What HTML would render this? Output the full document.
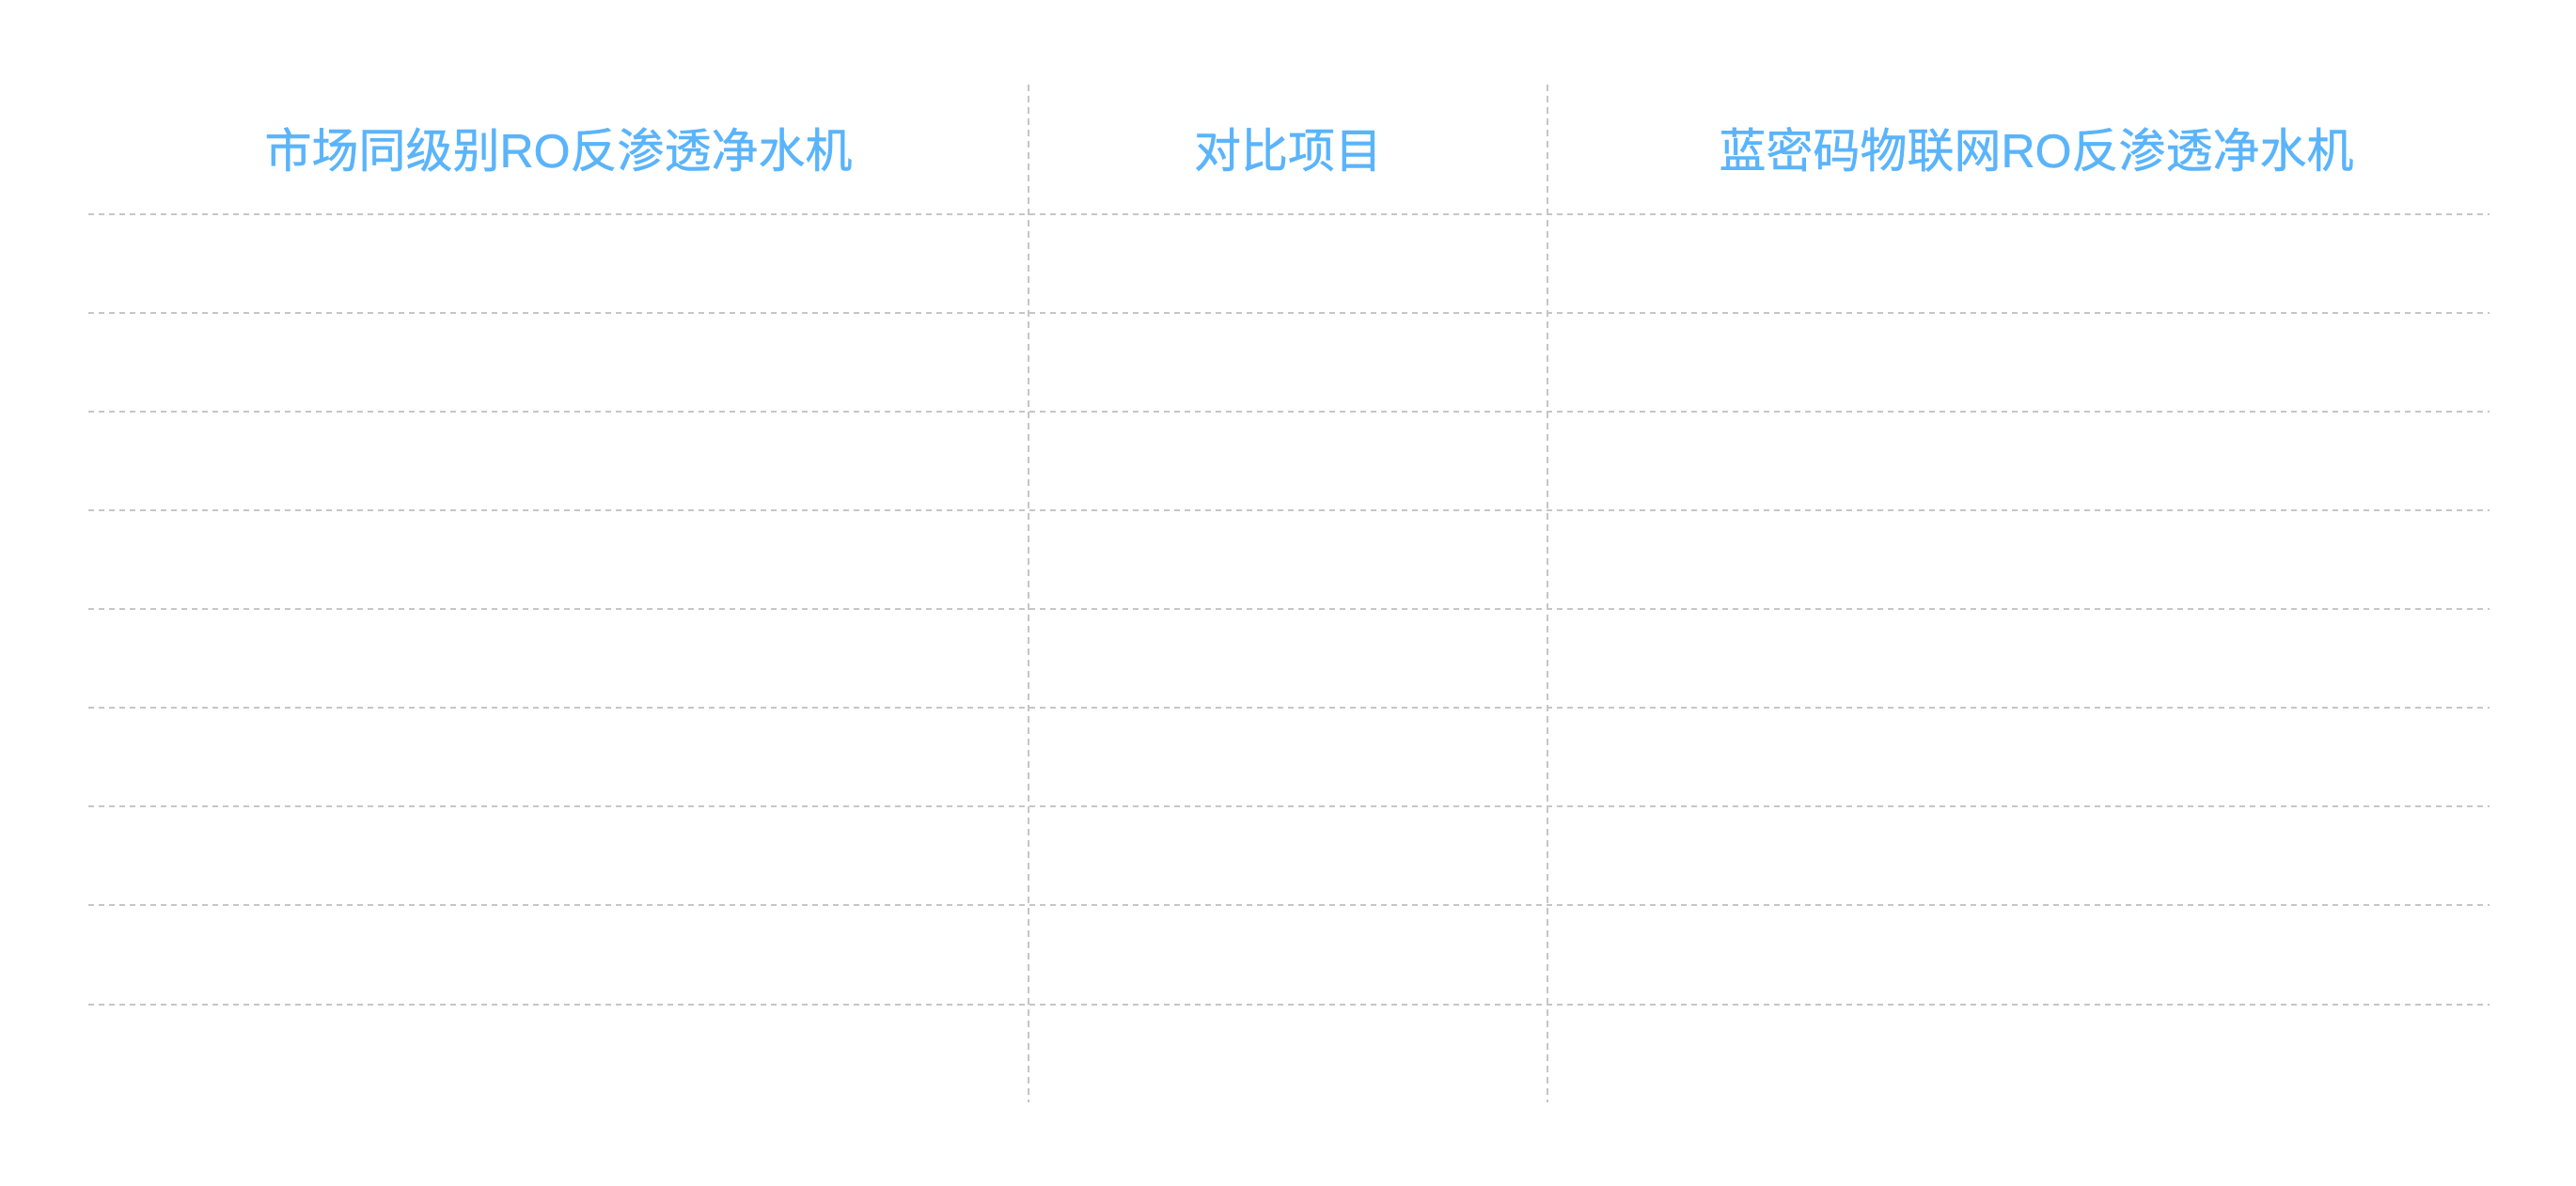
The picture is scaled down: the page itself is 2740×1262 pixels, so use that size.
<!DOCTYPE html>
<html><head><meta charset="utf-8">
<style>
html,body{margin:0;padding:0;background:#fff;}
body{width:2740px;height:1262px;position:relative;overflow:hidden;}
svg{position:absolute;left:0;top:0;}
.t{position:absolute;top:131px;height:60px;line-height:60px;font-size:50px;color:#5ab4fb;-webkit-text-stroke:0.5px #5ab4fb;text-align:center;font-family:"Liberation Sans","Noto Sans CJK SC",sans-serif;white-space:nowrap;}
</style></head><body>
<svg width="2740" height="1262" xmlns="http://www.w3.org/2000/svg">
<g stroke="#c6c6c6" stroke-width="2" fill="none">
<g stroke-dasharray="6 5">
<line x1="94" y1="228" x2="2648" y2="228"/>
<line x1="94" y1="333" x2="2648" y2="333"/>
<line x1="94" y1="438" x2="2648" y2="438"/>
<line x1="94" y1="543" x2="2648" y2="543"/>
<line x1="94" y1="648" x2="2648" y2="648"/>
<line x1="94" y1="753" x2="2648" y2="753"/>
<line x1="94" y1="858" x2="2648" y2="858"/>
<line x1="94" y1="963" x2="2648" y2="963"/>
<line x1="94" y1="1069" x2="2648" y2="1069"/>
</g>
<g stroke-dasharray="7 5">
<line x1="1094" y1="90" x2="1094" y2="1173"/>
<line x1="1646" y1="90" x2="1646" y2="1173"/>
</g>
</g>
</svg>
<div class="t" style="left:94px;width:1000px;">市场同级别RO反渗透净水机</div>
<div class="t" style="left:1094px;width:552px;">对比项目</div>
<div class="t" style="left:1646px;width:1040px;">蓝密码物联网RO反渗透净水机</div>
</body></html>
